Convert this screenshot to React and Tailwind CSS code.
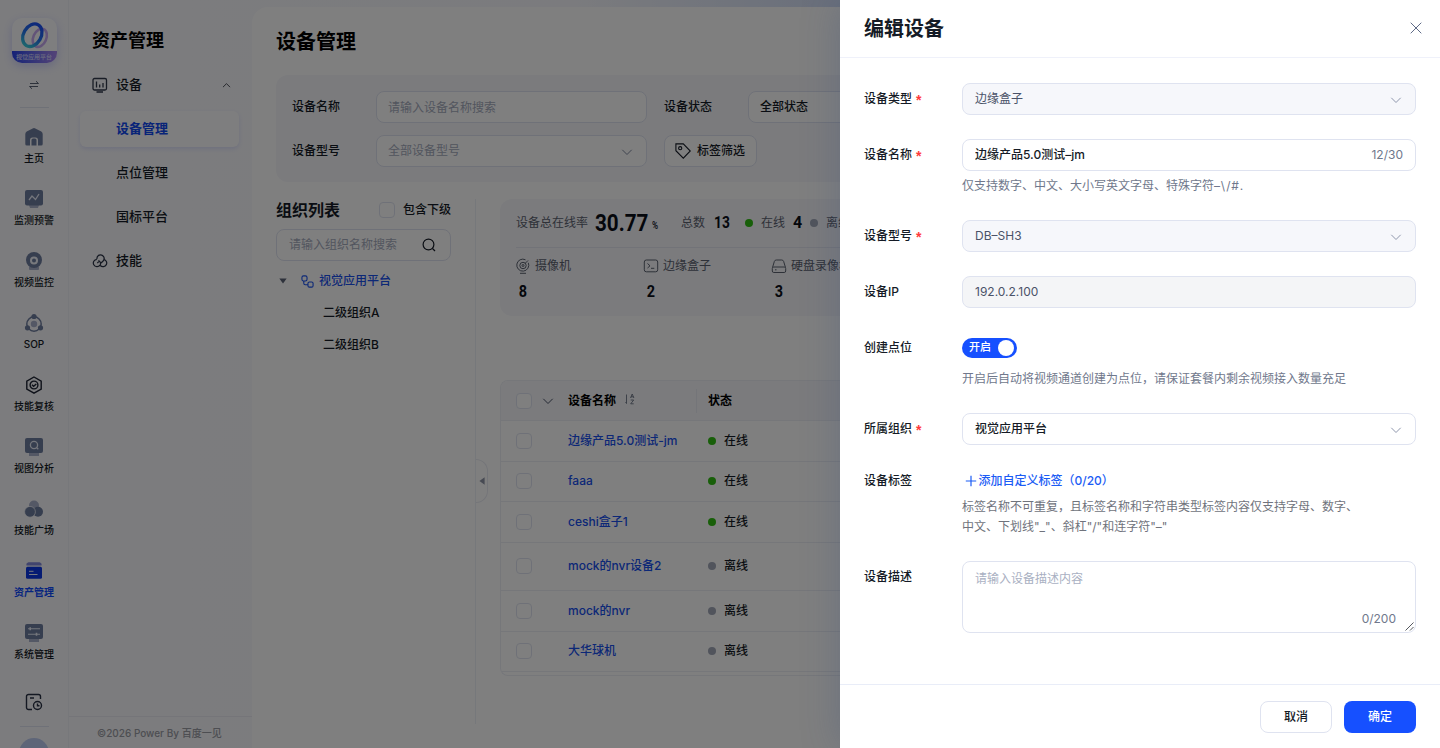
import { useState } from 'react';
import clsx from 'clsx';

const RAIL_ITEMS = [
  { key: 'home', label: '主页' },
  { key: 'alert', label: '监测预警' },
  { key: 'video', label: '视频监控' },
  { key: 'sop', label: 'SOP' },
  { key: 'review', label: '技能复核' },
  { key: 'analysis', label: '视图分析' },
  { key: 'plaza', label: '技能广场' },
  { key: 'asset', label: '资产管理' },
  { key: 'system', label: '系统管理' },
];

const DEVICES = [
  { name: '边缘产品5.0测试-jm', online: true },
  { name: 'faaa', online: true },
  { name: 'ceshi盒子1', online: true },
  { name: 'mock的nvr设备2', online: false, tall: true },
  { name: 'mock的nvr', online: false },
  { name: '大华球机', online: false },
];

const ChevronDown = ({ className }) => (
  <svg viewBox="0 0 12 12" className={clsx('shrink-0', className)} fill="none" stroke="currentColor" strokeWidth="1">
    <path d="M1.3 3.8 6 8.5l4.7-4.7" />
  </svg>
);

const RailIcon = ({ name }) => {
  const dark = '#6d7c9e';
  const light = '#a9b0ca';
  return (
    <svg viewBox="0 0 20 20" className="h-5 w-5">
      {name === 'home' && (
        <path fill={dark} fillRule="evenodd" d="M8.7 1.5a2.5 2.5 0 0 1 2.6 0l6 3A3 3 0 0 1 18.700 7.200V17a1.500 1.500 0 0 1-1.500 1.500H14V13a2.500 2.500 0 0 0-2.500-2.500h-3A2.500 2.500 0 0 0 6 13v5.500H2.800A1.500 1.500 0 0 1 1.300 17V7.200A3 3 0 0 1 2.700 4.500zM7.500 18.500V13a1.500 1.500 0 0 1 1.500-1.500h2a1.500 1.500 0 0 1 1.500 1.500v5.500z" />
      )}
      {name === 'alert' && (
        <g>
          <path fill={light} d="M5 16h10l-1 3H6z" />
          <rect x="1" y="1" width="18" height="15.500" rx="2" fill={dark} />
          <path d="M5 11l3-4 3.500 3.500L15 5" fill="none" stroke="#e8ecf8" strokeWidth="1.300" />
        </g>
      )}
      {name === 'video' && (
        <g>
          <path fill={light} d="M5 15.500h10V18a1 1 0 0 1-1 1H6a1 1 0 0 1-1-1z" />
          <circle cx="10" cy="9" r="8" fill={dark} />
          <circle cx="10" cy="9.500" r="4" fill="#f1f3fb" />
          <circle cx="10" cy="9.500" r="2" fill={dark} />
        </g>
      )}
      {name === 'sop' && (
        <g>
          <circle cx="10" cy="11" r="7.200" fill="none" stroke={dark} strokeWidth="1.500" />
          <circle cx="10" cy="11" r="3.200" fill={light} />
          <circle cx="10" cy="3.500" r="2.600" fill={dark} />
          <circle cx="3.500" cy="14.800" r="2.600" fill={dark} />
          <circle cx="16.500" cy="14.800" r="2.600" fill={dark} />
        </g>
      )}
      {name === 'review' && (
        <g fill="none" stroke="#1d2333" strokeWidth="1.400">
          <path d="M10 2l7.200 4.100v8L10 18.200l-7.200-4.100v-8z" />
          <circle cx="10" cy="10" r="3.900" />
          <path d="M8 9.800l1.600 1.500L12.300 9" />
        </g>
      )}
      {name === 'analysis' && (
        <g>
          <path fill={light} d="M5 16h10v3H5z" />
          <rect x="1" y="1" width="18" height="15" rx="2" fill={dark} />
          <circle cx="10" cy="8" r="3.600" fill="none" stroke="#e8ecf8" strokeWidth="1.300" />
          <path d="M12.500 10.500l1.800 1.800" stroke="#e8ecf8" strokeWidth="1.300" />
        </g>
      )}
      {name === 'plaza' && (
        <g>
          <circle cx="10" cy="6.500" r="5" fill={light} />
          <circle cx="14" cy="12.800" r="5" fill={dark} />
          <circle cx="6" cy="12.800" r="5.400" fill={dark} stroke="#f8f9fe" strokeWidth=".7" />
        </g>
      )}
      {name === 'asset' && (
        <g>
          <path fill="#8289dc" d="M4.500 1.200h11a2.500 2.500 0 0 1 2 3.300h-15a2.500 2.500 0 0 1 2-3.300z" />
          <rect x="2" y="5.800" width="16" height="12" rx="1.500" fill="#0a36e6" />
          <path d="M5 10.300h4.500M5 13.500h8.500" stroke="#eaf0ff" strokeWidth="1" />
        </g>
      )}
      {name === 'system' && (
        <g>
          <path fill={light} d="M5 16h10v3H5z" />
          <rect x="1" y="1" width="18" height="15" rx="2" fill={dark} />
          <path d="M4 5.800h12M4 11.200h12" stroke="#e8ecf8" strokeWidth="1.100" />
          <path d="M6.200 4.300v3M12.500 9.700v3" stroke="#e8ecf8" strokeWidth="1.600" />
        </g>
      )}
    </svg>
  );
};

const Rail = () => (
  <aside className="flex w-[69px] shrink-0 flex-col items-center border-r border-[#eff0f6] pt-[18px]">
    <div className="flex h-[45px] w-[45px] shrink-0 flex-col overflow-hidden rounded-[10px] bg-[#fcfdff] shadow-[0_3px_10px_rgba(80,90,255,0.25)]">
      <svg viewBox="0 0 45 33" className="h-[33px] w-[45px]" fill="none">
        <defs>
          <linearGradient id="ring" x1="0" y1="0" x2="0" y2="1">
            <stop offset="0" stopColor="#1c50f5" />
            <stop offset=".55" stopColor="#2575ee" />
            <stop offset="1" stopColor="#38c8dd" />
          </linearGradient>
        </defs>
        <ellipse cx="27.800" cy="19.800" rx="6.500" ry="9.500" transform="rotate(24 27.800 19.800)" stroke="#c6a8f1" strokeWidth="2.600" />
        <ellipse cx="20.300" cy="17.200" rx="8.800" ry="12" transform="rotate(30 20.300 17.200)" stroke="url(#ring)" strokeWidth="3.300" />
      </svg>
      <div className="h-3 bg-linear-to-r from-[#2b43ee] to-[#a886ee] text-center text-[6px] leading-[11px] font-medium text-[#d9dcff]">视觉应用平台</div>
    </div>
    <svg viewBox="0 0 12 10" className="mt-[17px] h-2.5 w-3 shrink-0" fill="none" stroke="#4a5268" strokeWidth=".9">
      <path d="M2 3.500h8.500M8 1.200l2.500 2.300M10 6.500H1.500L4 8.800" />
    </svg>
    <div className="mt-[17px] h-px w-[29px] shrink-0 bg-[#dfe2ee]" />
    <nav className="mt-[19px] flex flex-col">
      {RAIL_ITEMS.map((item) => (
        <div key={item.key} className="flex h-[62px] flex-col items-center">
          <RailIcon name={item.key} />
          <span
            className={clsx(
              'mt-[3px] text-[10px] leading-4 whitespace-nowrap',
              item.key === 'asset' ? 'font-bold text-[#0f4bff]' : 'font-medium text-[#151b26]'
            )}
          >
            {item.label}
          </span>
        </div>
      ))}
    </nav>
    <svg viewBox="0 0 18 18" className="mt-[8px] h-[18px] w-[18px] shrink-0" fill="none" stroke="#283044" strokeWidth="1.400">
      <path d="M7 16.500H3.500a2 2 0 0 1-2-2v-11a2 2 0 0 1 2-2h10a2 2 0 0 1 2 2V6M5 5h4" />
      <circle cx="12.500" cy="12.500" r="4" />
      <path d="M12.500 10.500v2.200h2" />
    </svg>
    <div className="mt-[15px] h-px w-[29px] shrink-0 bg-[#dfe2f0]" />
    <div className="mt-[11px] h-[30px] w-[30px] shrink-0 rounded-full bg-[#bccbf0]" />
  </aside>
);

const SubNav = () => (
  <aside className="flex w-[183px] shrink-0 flex-col">
    <h2 className="mt-[27px] pl-[23px] text-[18px] leading-7 font-bold text-black">资产管理</h2>
    <div className="mt-3 flex h-9 items-center pr-[21px] pl-[23px]">
      <svg viewBox="0 0 16 16" className="h-4 w-4" fill="none" stroke="#323a4c" strokeWidth="1.300">
        <rect x="1" y="1.500" width="13.500" height="11.500" rx="1.500" />
        <path d="M4.500 4.500v6M7.700 7.500v3M11 6v4.500M4.500 15h6.500" />
      </svg>
      <span className="ml-2 text-[13px] font-medium text-[#151b26]">设备</span>
      <ChevronDown className="ml-auto h-[9px] w-[9px] rotate-180 text-[#151b26]" />
    </div>
    <div className="mt-2 mr-[13px] ml-[11px] flex h-9 items-center rounded-md bg-[#fdfdfe] pl-9 text-[13px] font-bold text-[#1048f0] shadow-[0_2px_4px_rgba(80,100,255,0.14)]">
      设备管理
    </div>
    <div className="mx-[11px] mt-2 flex h-9 items-center pl-9 text-[13px] font-medium text-[#151b26]">点位管理</div>
    <div className="mx-[11px] mt-2 flex h-9 items-center pl-9 text-[13px] font-medium text-[#151b26]">国标平台</div>
    <div className="mt-2 flex h-9 items-center pl-[23px]">
      <svg viewBox="0 0 16 16" className="h-4 w-4" fill="none" stroke="#283044" strokeWidth="1.200">
        <path d="M5 6.200A3.600 3.600 0 1 1 10.900 8.200L9 10M4.800 6.300A3.700 3.700 0 1 0 8 12.200c.8-1.200.8-2.300 0-3.400L6.500 7.300M11.400 6.300A3.700 3.700 0 1 1 8.300 12.500M5.300 10.200l1.400-1.500" />
      </svg>
      <span className="ml-2 text-[13px] font-medium text-[#151b26]">技能</span>
    </div>
    <footer className="mt-auto flex h-8 items-center border-t border-[#eaebf2] pt-px pl-7 text-[10px] font-medium text-[#9a9ca5]">
      ©2026 Power By 百度一见
    </footer>
  </aside>
);

const FilterPanel = () => (
  <section className="mt-[18px] flex h-[107px] flex-col gap-3 rounded-l-xl bg-[#f6f7fb] pt-4 pl-4 text-[12px] text-[#151b26]">
    <div className="flex h-8 items-center">
      <span className="w-[84px] font-medium">设备名称</span>
      <input className="h-8 w-[271px] rounded-lg border border-[#dfe3f0] bg-white px-[11px] outline-none placeholder:text-[#a5abbd]" placeholder="请输入设备名称搜索" />
      <span className="ml-[17px] w-[84px] font-medium">设备状态</span>
      <button className="flex h-8 w-[271px] shrink-0 items-center rounded-lg border border-[#dfe3f0] bg-white px-[11px] font-medium">全部状态</button>
    </div>
    <div className="flex h-8 items-center">
      <span className="w-[84px] font-medium">设备型号</span>
      <button className="flex h-8 w-[271px] items-center justify-between rounded-lg border border-[#dfe3f0] bg-white px-[11px] text-[#a5abbd]">
        全部设备型号
        <ChevronDown className="mt-0.5 mr-0.5 h-3 w-3 text-[#8089a0]" />
      </button>
      <button className="ml-[17px] flex h-8 w-[93px] items-center rounded-lg border border-[#dfe3f0] bg-white pl-2.5 font-medium">
        <svg viewBox="0 0 16 16" className="mr-1.5 h-4 w-4" fill="none" stroke="#151b26" strokeWidth="1.100">
          <path d="M.9.900h7.400L15.300 8l-7 7.100L.9 7.700z" />
          <circle cx="5.200" cy="5.200" r="1.600" />
        </svg>
        标签筛选
      </button>
    </div>
  </section>
);

const OrgTree = () => (
  <section className="w-[200px] shrink-0 border-r border-[#edf0f6] pr-6">
    <div className="flex h-[22px] items-center">
      <h3 className="text-[16px] font-bold text-[#151b26]">组织列表</h3>
      <span className="ml-auto h-4 w-4 rounded border border-[#dfe3f0] bg-white" />
      <span className="ml-2 text-[12px] font-medium text-[#151b26]">包含下级</span>
    </div>
    <div className="mt-2 flex h-8 items-center justify-between rounded-lg border border-[#dfe3f0] bg-white px-3 text-[12px] text-[#a5abbd]">
      请输入组织名称搜索
      <svg viewBox="0 0 14 14" className="mr-0.5 h-3.5 w-3.5" fill="none" stroke="#151b26" strokeWidth="1.200">
        <circle cx="6.500" cy="6.500" r="5.400" />
        <path d="M10.500 10.500l2.500 2.500" />
      </svg>
    </div>
    <div className="mt-1 flex h-8 items-center pl-[3px] text-[12px] font-medium text-[#1850ee]">
      <svg viewBox="0 0 8 6" className="h-1.5 w-2" fill="#5c6477">
        <path d="M.3.500h7.400L4 5.600z" />
      </svg>
      <svg viewBox="0 0 14 14" className="mr-[5px] ml-3.5 h-[13px] w-[13px]" fill="none" stroke="#1850ee" strokeWidth="1.200">
        <rect x="1" y="1" width="5.500" height="5.500" rx="1.800" />
        <rect x="7.500" y="7.500" width="5.500" height="5.500" rx="1.500" />
        <path d="M3 6.500V9a1.500 1.500 0 0 0 1.500 1.500h3" />
      </svg>
      视觉应用平台
    </div>
    <div className="flex h-8 items-center pl-[47px] text-[12px] font-medium text-[#151b26]">二级组织A</div>
    <div className="flex h-8 items-center pl-[47px] text-[12px] font-medium text-[#151b26]">二级组织B</div>
  </section>
);

const KindIcon = ({ kind }) => (
  <svg viewBox="0 0 16 16" className="h-4 w-4 shrink-0" fill="none" stroke="#5c6270" strokeWidth="1">
    {kind === 'camera' && (
      <g>
        <path d="M10.500 1.800a6 6 0 1 0 2.800 3M5 15.300h6" />
        <circle cx="8" cy="7.500" r="3.200" />
        <circle cx="8" cy="7.500" r="1" />
        <path d="M10 5.500l3-3" />
      </g>
    )}
    {kind === 'box' && (
      <g>
        <rect x="1.300" y="2" width="13.400" height="11.800" rx="2" />
        <path d="M4.500 5.500l2.500 2.300-2.500 2.200M8 10.300h3.300" />
      </g>
    )}
    {kind === 'disk' && (
      <g>
        <path d="M1.500 9.500L3.400 3.300A2 2 0 0 1 5.300 2h5.400a2 2 0 0 1 1.900 1.300l1.900 6.200" />
        <rect x="1.300" y="9" width="13.400" height="5.500" rx="1.500" />
        <path d="M4 11.800h1.500" />
      </g>
    )}
  </svg>
);

const StatCard = () => (
  <section className="ml-6 flex h-[117px] flex-col overflow-hidden rounded-l-xl bg-[#f6f7fb] pl-4 text-[12px] text-[#5c6270]">
    <div className="flex h-[49px] items-center border-b border-[#e4e7f0] whitespace-nowrap">
      <span>设备总在线率</span>
      <span className="ml-[7px] w-[57px] origin-left scale-x-[0.86] font-['Roboto'] text-[24px] font-bold text-[#0b0f18]">30.77</span>
      <span className="mt-1.5 w-2 origin-left scale-x-[0.75] font-['Roboto'] text-[11px] font-bold text-[#2c313d]">%</span>
      <span className="ml-[21px]">总数</span>
      <span className="ml-[9px] w-[15px] origin-left scale-x-[0.86] font-['Roboto'] text-[16px] font-bold text-[#0b0f18]">13</span>
      <span className="ml-4 h-2 w-2 rounded-full bg-[#30bf13]" />
      <span className="ml-2">在线</span>
      <span className="ml-2 w-[10px] font-['Roboto'] text-[16px] font-bold text-[#0b0f18]">4</span>
      <span className="ml-[7px] h-2 w-2 rounded-full bg-[#a2a8b8]" />
      <span className="ml-2">离线</span>
    </div>
    <div className="flex pt-2.5">
      {[
        { kind: 'camera', label: '摄像机', count: 8 },
        { kind: 'box', label: '边缘盒子', count: 2 },
        { kind: 'disk', label: '硬盘录像机', count: 3 },
      ].map((item) => (
        <div key={item.kind} className="w-32 shrink-0">
          <div className="flex h-4 items-center gap-1 whitespace-nowrap -ml-px">
            <KindIcon kind={item.kind} />
            {item.label}
          </div>
          <div className="mt-1.5 origin-left scale-x-90 pl-[3px] font-['Roboto'] text-[16px] leading-6 font-bold text-[#0b0f18]">{item.count}</div>
        </div>
      ))}
    </div>
  </section>
);

const DeviceTable = () => (
  <section className="mt-16 ml-6 h-[296px] overflow-hidden rounded-l-lg border border-r-0 border-[#eceef5] text-[12px] font-medium text-[#151b26]">
    <div className="flex h-10 items-center border-b border-[#eceef5] bg-[#f6f7fb] pl-[15px] font-bold">
      <span className="h-4 w-4 rounded border border-[#dfe3f0] bg-white" />
      <ChevronDown className="ml-[10px] h-3 w-3 text-[#4a5268]" />
      <span className="ml-[14px] text-black">设备名称</span>
      <svg viewBox="0 0 10 12" className="mb-1 ml-[9px] h-3 w-2.5" stroke="#5c6477" strokeWidth=".8" fill="none">
        <path d="M1.500 1.500v9M.5 9.200l1 1.300M5.500 5l1.700-4 1.700 4M6 3.800h2.400M5.700 7h3l-3 3.800h3" />
      </svg>
      <span className="ml-[61px] h-6 w-px bg-[#e8eaf2]" />
      <span className="ml-[11px] text-black">状态</span>
    </div>
    {DEVICES.map((device) => (
      <div
        key={device.name}
        className={clsx('flex items-center border-b border-[#eceef5] pl-[15px]', device.tall ? 'h-[48.500px]' : 'h-[40.500px]')}
      >
        <span className="h-4 w-4 rounded border border-[#dfe3f0] bg-white" />
        <a className="ml-9 w-[140px] text-[#1850ee]">{device.name}</a>
        <span className={clsx('h-2 w-2 rounded-full', device.online ? 'bg-[#30bf13]' : 'bg-[#a2a8b8]')} />
        <span className="ml-2">{device.online ? '在线' : '离线'}</span>
      </div>
    ))}
  </section>
);

const FormRow = ({ label, required, className, children }) => (
  <div className={clsx('flex items-start', className)}>
    <label className="flex h-8 w-[98px] shrink-0 items-center font-medium text-[#151b26]">
      {label}
      {required && <span className="mt-[3px] ml-1 font-['Liberation_Sans'] text-[14px] font-bold text-[#ff3b3b]">*</span>}
    </label>
    <div className="min-w-0 flex-1">{children}</div>
  </div>
);

const SelectField = ({ value, disabled }) => (
  <button
    className={clsx(
      'flex h-8 w-full items-center justify-between rounded-lg border border-[#dfe3f0] px-3 text-left',
      disabled ? 'bg-[#f6f7fb] text-[#4a5268]' : 'bg-white font-medium text-[#151b26]'
    )}
  >
    {value}
    <ChevronDown className="mt-0.5 mr-px h-3 w-3 text-[#8f97ad]" />
  </button>
);

const EditDrawer = () => {
  const [name, setName] = useState('边缘产品5.0测试–jm');
  const [desc, setDesc] = useState('');

  return (
    <div className="absolute inset-y-0 right-0 flex w-[600px] flex-col bg-white text-[12px] shadow-[0_0_36px_rgba(50,75,125,0.28)]">
      <header className="flex h-[58px] items-center justify-between border-b border-[#eff1fa] pr-[18px] pl-6">
        <h2 className="text-[20px] font-bold text-[#151b26]">编辑设备</h2>
        <svg viewBox="0 0 12 12" className="mb-px h-3 w-3" stroke="#5f6a86" strokeWidth="1">
          <path d="M.7.700l10.600 10.600M11.300.700L.7 11.300" />
        </svg>
      </header>

      <div className="flex-1 pt-[24.500px] pr-6 pl-6">
        <FormRow label="设备类型" required className="h-14">
          <SelectField value="边缘盒子" disabled />
        </FormRow>
        <FormRow label="设备名称" required className="h-[81px]">
          <div className="flex h-8 items-center rounded-lg border border-[#dfe3f0] px-3">
            <input
              value={name}
              maxLength={30}
              onChange={(e) => setName(e.target.value)}
              className="min-w-0 flex-1 font-medium text-[#151b26] outline-none"
            />
            <span className="text-[#70788c]">12/30</span>
          </div>
          <p className="mt-1.5 leading-[18px] text-[#70788c]">
            仅支持数字、中文、大小写英文字母、特殊字符<span className="tracking-[0.800px]">–\/#.</span>
          </p>
        </FormRow>
        <FormRow label="设备型号" required className="h-14">
          <SelectField value="DB–SH3" disabled />
        </FormRow>
        <FormRow label="设备IP" className="h-14">
          <div className="flex h-8 items-center rounded-lg border border-[#dfe3f0] bg-[#f4f5f7] px-3 text-[#4a5268]">192.0.2.100</div>
        </FormRow>
        <FormRow label="创建点位" className="h-[81px]">
          <div className="flex h-8 items-center">
            <button className="flex h-5 w-[55px] items-center justify-between rounded-full bg-[#1650ff] pr-[3px] pl-[7px] text-[11px] font-medium text-white">
              开启
              <span className="h-4 w-4 rounded-full bg-white" />
            </button>
          </div>
          <p className="mt-1.5 leading-[18px] text-[#70788c]">开启后自动将视频通道创建为点位，请保证套餐内剩余视频接入数量充足</p>
        </FormRow>
        <FormRow label="所属组织" required className="h-[52px]">
          <SelectField value="视觉应用平台" />
        </FormRow>
        <FormRow label="设备标签" className="h-24">
          <button className="flex h-8 items-center pl-[3px] font-medium text-[#1b5cf5]">
            <svg viewBox="0 0 12 12" className="mr-[1.500px] h-3 w-3" stroke="currentColor" strokeWidth="1.200">
              <path d="M6 .8v10.400M.8 6h10.400" />
            </svg>
            添加自定义标签（0/20）
          </button>
          <p className="w-[400px] leading-5 text-[#70737c]">
            标签名称不可重复，且标签名称和字符串类型标签内容仅支持字母、数字、
            <br />
            中文、下划线"_"、斜杠"/"和连字符"–"
          </p>
        </FormRow>
        <FormRow label="设备描述">
          <div className="relative h-[72px]">
            <textarea
              value={desc}
              onChange={(e) => setDesc(e.target.value)}
              placeholder="请输入设备描述内容"
              className="block h-[72px] w-full resize-none rounded-lg border border-[#dfe3f0] px-3 pt-[7px] leading-5 outline-none placeholder:text-[#a9b0c2]"
            />
            <span className="absolute right-5 bottom-[5px] text-[#70788c]">{desc.length}/200</span>
            <svg viewBox="0 0 9 9" className="absolute right-0.5 bottom-0.5 h-[9px] w-[9px]" stroke="#55585f" strokeWidth="1">
              <path d="M.5 8.500l8-8M5 8.500l3.500-3.500" />
            </svg>
          </div>
        </FormRow>
      </div>

      <footer className="flex h-16 items-start justify-end gap-3 border-t border-[#e9edf8] pt-4 pr-6 font-medium">
        <button className="h-8 w-[72px] rounded-lg border border-[#dfe3f0] bg-white text-[#151b26]">取消</button>
        <button className="h-8 w-[72px] rounded-lg bg-[#1650ff] text-white">确定</button>
      </footer>
    </div>
  );
};

const App = () => (
  <div className="relative h-[748px] w-[1440px] overflow-hidden font-['Inter','Noto_Sans_CJK_SC',sans-serif]">
    <div className="flex h-full bg-linear-to-r from-[#f9f9fc] via-[#f6f7fc] via-40% to-[#d0dcf6] to-60%">
      <Rail />
      <SubNav />
      <main className="mt-[7px] flex min-w-0 flex-1 flex-col rounded-tl-2xl bg-white pl-6">
        <h1 className="mt-[21px] text-[20px] leading-[29px] font-bold text-black">设备管理</h1>
        <FilterPanel />
        <div className="mt-[17px] flex h-[525px]">
          <OrgTree />
          <div className="relative min-w-0 flex-1">
            <StatCard />
            <DeviceTable />
            <div className="absolute top-[260px] left-0 flex h-[44px] w-3 items-center justify-center rounded-r-xl border border-l-0 border-[#e9ebf2] bg-white">
              <svg viewBox="0 0 6 8" className="h-2 w-1.5" fill="#8f95a6">
                <path d="M5.600.300v7.400L.4 4z" />
              </svg>
            </div>
          </div>
        </div>
      </main>
    </div>
    <div className="absolute inset-0 bg-black/50" />
    <EditDrawer />
  </div>
);

export default App;
